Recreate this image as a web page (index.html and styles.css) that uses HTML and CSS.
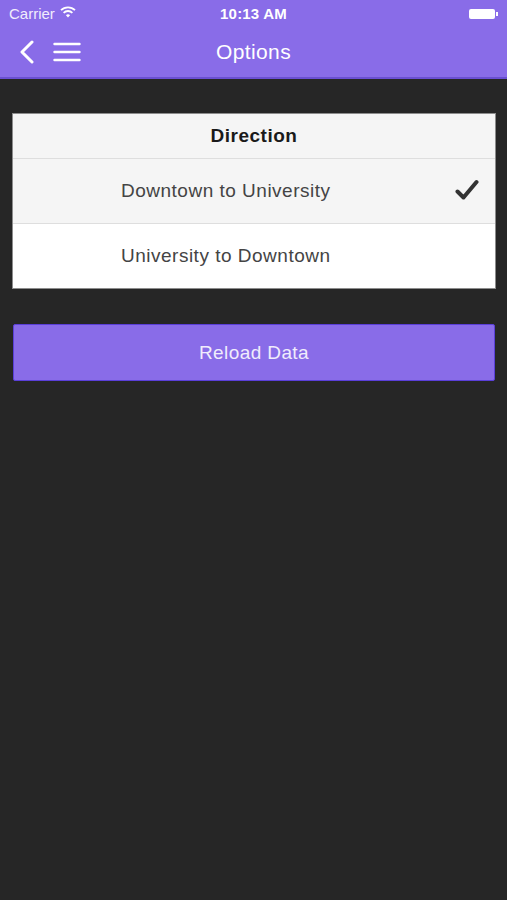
FILE: index.html
```html
<html lang="en">
<head>
    <meta charset="UTF-8">
    <meta name="viewport" content="width=device-width, initial-scale=1.0">
    <title>Options</title>
    <link rel="stylesheet" href="styles.css">
</head>
<body>
    <div class="header">
        <div class="status">
            <div class="carrier">Carrier
                <svg class="wifi" width="16" height="12" viewBox="0 0 16 12">
                    <path d="M1 4.2 A10 10 0 0 1 15 4.2" fill="none" stroke="#fff" stroke-width="1.8"/>
                    <path d="M3.6 6.8 A6.3 6.3 0 0 1 12.4 6.8" fill="none" stroke="#fff" stroke-width="1.8"/>
                    <path d="M5.9 9.2 A3 3 0 0 1 10.1 9.2 L8 11.4 Z" fill="#fff"/>
                </svg>
            </div>
            <div class="time">10:13 AM</div>
            <div class="battery"><span class="cell"></span><span class="tip"></span></div>
        </div>
        <div class="nav">
            <div class="nav-left">
                <svg width="16" height="24" viewBox="0 0 16 24">
                    <path d="M13 2 L3 12 L13 22" fill="none" stroke="#fff" stroke-width="3" stroke-linecap="round" stroke-linejoin="round"/>
                </svg>
                <svg width="28" height="22" viewBox="0 0 28 22">
                    <path d="M1.5 3 H26.5 M1.5 11 H26.5 M1.5 19 H26.5" stroke="#fff" stroke-width="2.4" stroke-linecap="round"/>
                </svg>
            </div>
            <div class="title">Options</div>
        </div>
    </div>

    <div class="content">
        <div class="table">
            <div class="table-head">Direction</div>
            <div class="row selected">
                <span>Downtown to University</span>
                <svg class="check" width="24" height="22" viewBox="0 0 24 22">
                    <path d="M2.5 12.5 L8.5 18.5 L21.5 3" fill="none" stroke="#333" stroke-width="4" stroke-linecap="round" stroke-linejoin="round"/>
                </svg>
            </div>
            <div class="row">
                <span>University to Downtown</span>
            </div>
        </div>

        <button class="reload">Reload Data</button>
    </div>
</body>
</html>
```

FILE: styles.css
```css
body {
    margin: 0;
    background: #262626;
    font-family: "Liberation Sans", Arial, sans-serif;
}
.header {
    background: #896ce8;
    border-bottom: 2px solid #6a4fd2;
    color: #fff;
}
.status {
    height: 27px;
    display: flex;
    align-items: center;
    justify-content: space-between;
    padding: 0 9px;
    font-size: 15px;
}
.carrier {
    display: flex;
    align-items: center;
    gap: 5px;
    width: 120px;
    color: #f1edfc;
}
.wifi {
    margin-top: -3px;
}
.time {
    font-weight: bold;
    letter-spacing: 0.2px;
}
.battery {
    width: 120px;
    display: flex;
    justify-content: flex-end;
    align-items: center;
}
.cell {
    width: 26px;
    height: 10px;
    background: #fff;
    border-radius: 2px;
}
.tip {
    width: 2px;
    height: 4px;
    background: #fff;
    margin-left: 1px;
}
.nav {
    height: 50px;
    display: flex;
    align-items: center;
    justify-content: center;
    position: relative;
}
.nav-left {
    position: absolute;
    left: 19px;
    top: 13px;
    display: flex;
    gap: 18px;
    align-items: center;
}
.title {
    font-size: 21px;
    letter-spacing: 0.4px;
}
.content {
    padding: 34px 11px 0 12px;
}
.table {
    background: #fff;
    border: 1px solid #8c8c8c;
}
.table-head {
    height: 44px;
    background: #f5f5f5;
    border-bottom: 1px solid #dedede;
    display: flex;
    align-items: center;
    justify-content: center;
    font-weight: bold;
    font-size: 19px;
    letter-spacing: 0.5px;
    color: #1a1a1a;
}
.row {
    height: 64px;
    display: flex;
    align-items: center;
    justify-content: space-between;
    padding: 0 16px 0 108px;
    font-size: 19px;
    letter-spacing: 0.5px;
    color: #444;
}
.row.selected {
    background: #f5f5f5;
    border-bottom: 1px solid #dedede;
}
.check {
    margin-top: -3px;
}
.reload {
    display: block;
    width: 482px;
    height: 57px;
    margin: 35px 0 0 1px;
    background: #896ce8;
    border: 1px solid #5a3fd8;
    border-radius: 2px;
    color: #f0ecfc;
    font-family: "Liberation Sans", Arial, sans-serif;
    font-size: 19px;
    letter-spacing: 0.4px;
    cursor: pointer;
}
```
